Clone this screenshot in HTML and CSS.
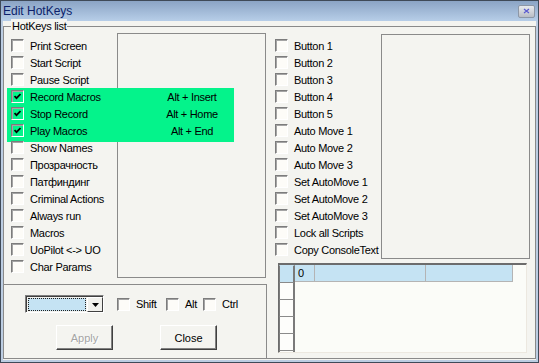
FILE: index.html
```html
<!DOCTYPE html>
<html lang="en">
<head>
  <meta charset="UTF-8">
  <title>Edit HotKeys</title>
  <link rel="stylesheet" href="styles.css">
</head>
<body>
  <div class="window">
    <div class="titlebar">
      <span class="title">Edit HotKeys</span>
      <button class="close-btn">
        <svg width="7" height="6" viewBox="0 0 7 6"><path d="M1 1l5 4M6 1l-5 4" stroke="#5a5ad0" stroke-width="1.2" fill="none"/></svg>
      </button>
    </div>

    <div class="client">
      <div class="group">
        <span class="legend">HotKeys list</span>

        <div class="left">
          <div class="keys">
            <div class="listbox"></div>
            <div class="checklist">
              <label class="row"><span class="box"></span>Print Screen</label>
              <label class="row"><span class="box"></span>Start Script</label>
              <label class="row"><span class="box"></span>Pause Script</label>
              <div class="hl">
                <label class="row"><span class="box checked"><svg width="7" height="7" viewBox="0 0 7 7"><path d="M0.5 3l2 2.2L6.5 1" fill="none" stroke="#000" stroke-width="1.8"/></svg></span><span class="name">Record Macros</span><span class="key">Alt + Insert</span></label>
                <label class="row"><span class="box checked"><svg width="7" height="7" viewBox="0 0 7 7"><path d="M0.5 3l2 2.2L6.5 1" fill="none" stroke="#000" stroke-width="1.8"/></svg></span><span class="name">Stop Record</span><span class="key">Alt + Home</span></label>
                <label class="row"><span class="box checked"><svg width="7" height="7" viewBox="0 0 7 7"><path d="M0.5 3l2 2.2L6.5 1" fill="none" stroke="#000" stroke-width="1.8"/></svg></span><span class="name">Play Macros</span><span class="key">Alt + End</span></label>
              </div>
              <label class="row"><span class="box"></span>Show Names</label>
              <label class="row"><span class="box"></span>Прозрачность</label>
              <label class="row"><span class="box"></span>Патфиндинг</label>
              <label class="row"><span class="box"></span>Criminal Actions</label>
              <label class="row"><span class="box"></span>Always run</label>
              <label class="row"><span class="box"></span>Macros</label>
              <label class="row"><span class="box"></span>UoPilot &lt;-&gt; UO</label>
              <label class="row"><span class="box"></span>Char Params</label>
            </div>
          </div>

          <div class="editor">
            <div class="mods">
              <div class="combo">
                <span class="combo-field"></span>
                <span class="combo-btn"><svg width="7" height="4" viewBox="0 0 7 4"><path d="M0 0h7L3.5 4z" fill="#000"/></svg></span>
              </div>
              <label class="mod mod-shift"><span class="box"></span>Shift</label>
              <label class="mod mod-alt"><span class="box"></span>Alt</label>
              <label class="mod"><span class="box"></span>Ctrl</label>
            </div>
            <div class="actions">
              <button class="btn" disabled>Apply</button>
              <button class="btn">Close</button>
            </div>
          </div>
        </div>

        <div class="right">
          <div class="keys keys-right">
            <div class="listbox"></div>
            <div class="checklist">
              <label class="row"><span class="box"></span>Button 1</label>
              <label class="row"><span class="box"></span>Button 2</label>
              <label class="row"><span class="box"></span>Button 3</label>
              <label class="row"><span class="box"></span>Button 4</label>
              <label class="row"><span class="box"></span>Button 5</label>
              <label class="row"><span class="box"></span>Auto Move 1</label>
              <label class="row"><span class="box"></span>Auto Move 2</label>
              <label class="row"><span class="box"></span>Auto Move 3</label>
              <label class="row"><span class="box"></span>Set AutoMove 1</label>
              <label class="row"><span class="box"></span>Set AutoMove 2</label>
              <label class="row"><span class="box"></span>Set AutoMove 3</label>
              <label class="row"><span class="box"></span>Lock all Scripts</label>
              <label class="row"><span class="box"></span>Copy ConsoleText</label>
            </div>
          </div>

          <div class="sheet">
            <div class="sheet-row">
              <span class="rh sel"></span>
              <span class="cell cell-id">0</span>
              <span class="cell cell-a"></span>
              <span class="cell cell-b"></span>
            </div>
            <div class="sheet-row"><span class="rh"></span></div>
            <div class="sheet-row"><span class="rh"></span></div>
            <div class="sheet-row"><span class="rh"></span></div>
            <div class="sheet-row"><span class="rh"></span></div>
            <div class="sheet-row"><span class="rh"></span></div>
          </div>
        </div>
      </div>
    </div>
  </div>
</body>
</html>
```

FILE: styles.css
```css
* {
  box-sizing: border-box;
}
body {
  margin: 0;
  font-family: "Liberation Sans", Arial, sans-serif;
  font-size: 11px;
  letter-spacing: -0.3px;
  color: #000;
  background: #f4f4f0;
}
.window {
  width: 539px;
  height: 363px;
  display: flex;
  flex-direction: column;
  border: 1px solid #3f4a58;
  background: #f4f4f0;
}
.titlebar {
  height: 20px;
  display: flex;
  align-items: center;
  justify-content: space-between;
  padding: 0 3px 0 2px;
  background: linear-gradient(#8ba4c5, #b7cee8);
}
.title {
  font-size: 12px;
  letter-spacing: 0;
  color: #0c1f6b;
}
.close-btn {
  width: 17px;
  height: 13px;
  padding: 0;
  display: flex;
  align-items: center;
  justify-content: center;
  border: 1px solid #8d97a6;
  border-radius: 2px;
  background: linear-gradient(#e8eaee, #b9bdc5);
}
.client {
  flex: 1;
  padding: 5px 0 1px;
  border: 2px solid #bccde2;
  border-top: 0;
}
.group {
  position: relative;
  display: flex;
  height: 333px;
  border: 1px solid #8a8a8a;
}
.legend {
  position: absolute;
  left: 7px;
  top: -8px;
  padding: 0 1px;
  line-height: 14px;
  background: #f4f4f0;
}

/* checkbox lists */
.keys {
  display: grid;
  grid-template-columns: 113px 149px;
  height: 257px;
}
.keys-right {
  grid-template-columns: 114px 149px;
  height: 232px;
}
.listbox {
  grid-area: 1 / 2;
  margin-top: 6px;
  height: 245px;
  border: 1px solid #8a8a8a;
}
.keys-right .listbox {
  margin-top: 7px;
  height: 225px;
}
.checklist {
  grid-area: 1 / 1 / 2 / 3;
  padding-top: 10px;
}
.row {
  display: flex;
  align-items: center;
  height: 17px;
  padding-left: 7px;
  white-space: nowrap;
}
.right .row {
  padding-left: 8px;
}
.box {
  flex: none;
  width: 13px;
  height: 13px;
  margin-right: 6px;
  display: flex;
  align-items: center;
  justify-content: center;
  border: 1px solid;
  border-color: #7c7c7c #fff #fff #7c7c7c;
  box-shadow: inset 1px 1px 0 #a4a4a4;
  background: #fdfcf8;
}
.hl {
  margin: 0 32px -3px 3px;
  padding-bottom: 3px;
  background: #04f38b;
}
.hl .row {
  padding-left: 4px;
}
.hl .box {
  background: transparent;
}
.key {
  margin-left: auto;
  width: 84px;
  text-align: center;
}

/* bottom-left editor */
.left {
  width: 263px;
}
.editor {
  height: 74px;
  border-top: 1px solid #8a8a8a;
  border-right: 1px solid #8a8a8a;
  padding: 10px 0 0 21px;
}
.mods {
  display: flex;
  align-items: center;
  height: 18px;
}
.combo {
  width: 79px;
  height: 18px;
  margin-right: 13px;
  display: flex;
  padding: 1px 0 0 1px;
  border: 1px solid;
  border-color: #808080 #fff #fff #808080;
  box-shadow: inset 1px 1px 0 #404040;
}
.combo-field {
  flex: 1;
  margin: 1px;
  border: 1px dotted #222;
  background: #c5e3f3;
}
.combo-btn {
  width: 16px;
  display: flex;
  align-items: center;
  justify-content: center;
  border: 1px solid;
  border-color: #fff #404040 #404040 #fff;
  background: #f0f0ec;
}
.mod {
  display: flex;
  align-items: center;
}
.mod-shift {
  width: 49px;
}
.mod-alt {
  width: 37px;
}
.actions {
  display: flex;
  gap: 47px;
  margin-top: 12px;
  padding-left: 31px;
}
.btn {
  width: 57px;
  height: 25px;
  padding: 0;
  font: inherit;
  color: #000;
  background: #f4f4f0;
  border: 1px solid;
  border-color: #fff #404040 #404040 #fff;
  box-shadow: inset -1px -1px 0 #808080;
}
.btn:disabled {
  color: #a4a4a4;
  text-shadow: 1px 1px 0 #fff;
}

/* grid at bottom right */
.right {
  width: 268px;
}
.sheet {
  width: 249px;
  height: 90px;
  margin: 4px 0 0 11px;
  overflow: hidden;
  border: 1px solid;
  border-top-width: 2px;
  border-color: #6c6c6c #ece8e0 #ece8e0 #6c6c6c;
  background: #fbfcf8;
}
.sheet-row {
  display: flex;
  height: 17px;
}
.rh {
  width: 16px;
  border-top: 1px solid #8a8a8a;
  border-left: 1px solid #7a7a7a;
  border-right: 2px solid #7a7a7a;
  background: #fdfdfb;
}
.sheet-row:first-child .rh {
  border-top-color: transparent;
}
.rh.sel {
  background: #c5e3f3;
}
.cell {
  padding-left: 3px;
  line-height: 16px;
  background: #c5e3f3;
  border-right: 1px solid #b4b4b4;
  border-bottom: 1px solid #b4b4b4;
}
.cell-id {
  width: 20px;
}
.cell-a {
  width: 111px;
}
.cell-b {
  width: 87px;
}
```
